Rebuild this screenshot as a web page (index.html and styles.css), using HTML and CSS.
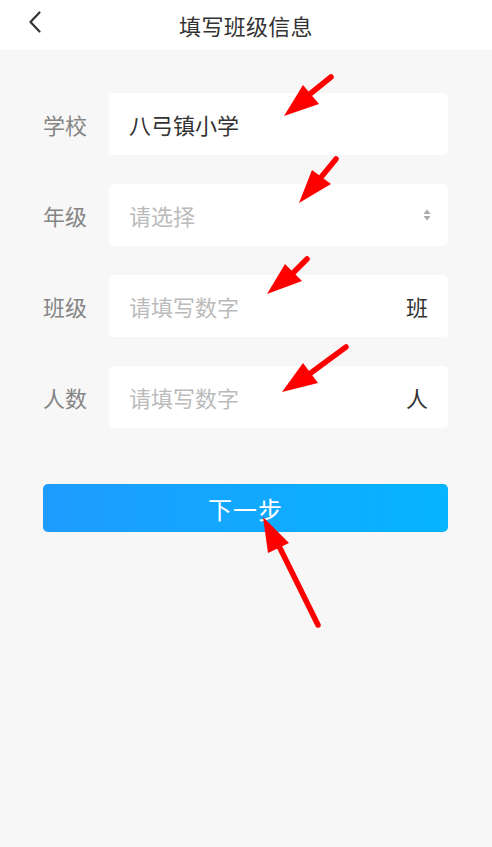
FILE: index.html
```html
<!DOCTYPE html>
<html lang="zh-CN">
<head>
<meta charset="utf-8">
<title>填写班级信息</title>
<link rel="stylesheet" href="styles.css">
</head>
<body>
<div class="page">
  <header class="nav">
    <svg class="back" width="14" height="22" viewBox="0 0 14 22"><path d="M11.5 1.5 L2.5 11 L11.5 20.5" fill="none" stroke="#333" stroke-width="2.2" stroke-linecap="round" stroke-linejoin="round"/></svg>
    <h1 class="title">填写班级信息</h1>
  </header>
  <main class="form">
    <div class="row">
      <span class="label">学校</span>
      <div class="field"><span class="value">八弓镇小学</span></div>
    </div>
    <div class="row">
      <span class="label">年级</span>
      <div class="field"><span class="placeholder">请选择</span>
        <svg class="sort" width="8" height="12" viewBox="0 0 8 12"><path d="M4 0.5 L7.5 5 L0.5 5 Z M0.5 7 L7.5 7 L4 11.5 Z" fill="#aaa"/></svg>
      </div>
    </div>
    <div class="row">
      <span class="label">班级</span>
      <div class="field"><span class="placeholder">请填写数字</span><span class="suffix">班</span></div>
    </div>
    <div class="row">
      <span class="label">人数</span>
      <div class="field"><span class="placeholder">请填写数字</span><span class="suffix">人</span></div>
    </div>
    <button class="next">下一步</button>
  </main>
  <svg class="marks" width="492" height="847" viewBox="0 0 492 847">
    <g stroke="#ff0000" stroke-width="5.5" stroke-linecap="round" fill="#ff0000">
      <line x1="331" y1="77" x2="305" y2="98"/>
      <polygon points="284,116 303,85 319,104" stroke="none"/>
      <line x1="336" y1="159" x2="318" y2="181"/>
      <polygon points="299,203 312,170 331,184" stroke="none"/>
      <line x1="307" y1="259" x2="290" y2="276"/>
      <polygon points="267,294 285,264 302,281" stroke="none"/>
      <line x1="346" y1="347" x2="308" y2="375"/>
      <polygon points="282,392 303,363 318,383" stroke="none"/>
      <line x1="318" y1="625" x2="276" y2="540"/>
      <polygon points="263,517 268,553 289,543" stroke="none"/>
    </g>
  </svg>
</div>
</body>
</html>
```
FILE: styles.css
```css
* { box-sizing: border-box; }
html, body {
  margin: 0;
  padding: 0;
  background: #f7f7f7;
}
body {
  font-family: "Noto Sans CJK SC", "Noto Sans", sans-serif;
}
.page {
  position: relative;
  width: 492px;
  min-height: 847px;
  background: #f7f7f7;
}
.nav {
  height: 50px;
  background: #fff;
  display: flex;
  align-items: center;
  justify-content: center;
  position: relative;
}
.back {
  position: absolute;
  left: 28px;
  top: 11px;
}
.title {
  margin: 0;
  font-size: 22px;
  font-weight: 400;
  color: #333;
  line-height: 1;
  letter-spacing: 0.3px;
}
.form {
  padding: 43px 44px 0 43px;
  display: flex;
  flex-direction: column;
  gap: 29px;
}
.row {
  display: flex;
  align-items: center;
}
.label {
  width: 66px;
  flex: none;
  font-size: 22px;
  color: #858585;
  line-height: 1;
}
.field {
  flex: 1;
  height: 62px;
  background: #fff;
  border-radius: 5px;
  display: flex;
  align-items: center;
  justify-content: space-between;
  padding: 0 20px;
  font-size: 22px;
  line-height: 1;
}
.value { color: #333; }
.placeholder { color: #bbb; }
.suffix { color: #333; }
.sort { margin-right: -3px; }
.next {
  margin-top: 27px;
  height: 48px;
  border: none;
  border-radius: 5px;
  background: linear-gradient(90deg, #1e9cff 0%, #06b4ff 100%);
  color: #fff;
  font-family: "Noto Sans CJK SC", "Noto Sans", sans-serif;
  font-size: 24px;
  letter-spacing: 1px;
  padding: 0;
}
.marks {
  position: absolute;
  left: 0;
  top: 0;
  pointer-events: none;
}
```
